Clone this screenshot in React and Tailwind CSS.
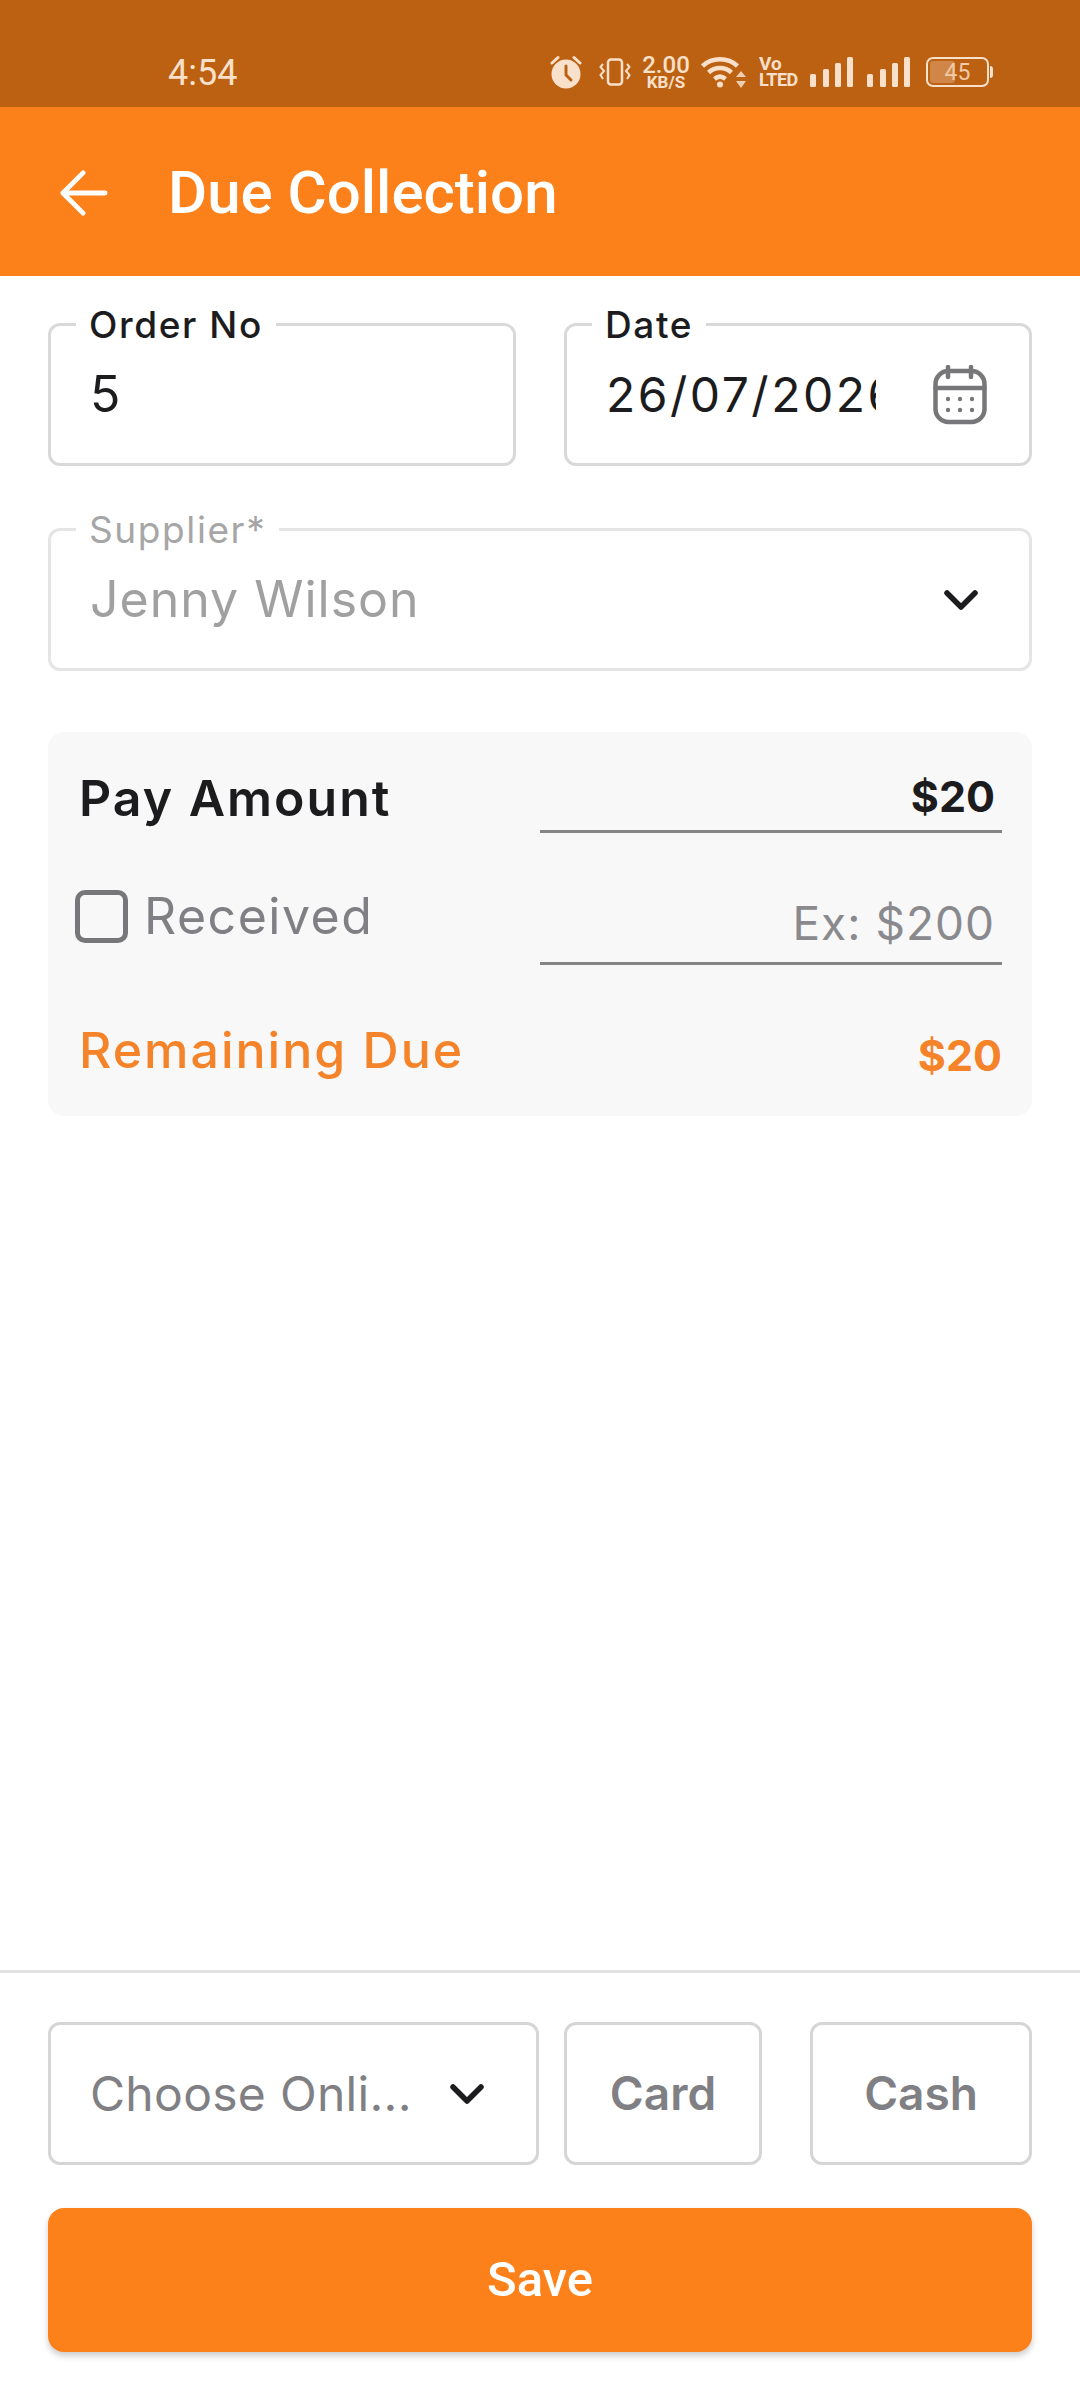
const sans = "font-['Inter','Noto_Sans',sans-serif]";

const Chevron = ({ className }) => (
    <svg viewBox="0 0 34 20" className={className} fill="none" stroke="#1c1c1e" strokeWidth="5.5" strokeLinecap="round" strokeLinejoin="round">
        <path d="M3 3 L17 17 L31 3" />
    </svg>
);

const CalendarIcon = () => (
    <svg viewBox="0 0 54 60" className="w-[54px] h-[60px]" fill="none" stroke="#77777a" strokeWidth="4.5" strokeLinecap="round">
        <rect x="2.5" y="6" width="49" height="51" rx="13" />
        <path d="M2.5 23 H51.5" />
        <path d="M15 2 V12 M38 2 V12" />
        <g fill="#77777a" stroke="none">
            <circle cx="15" cy="34" r="2.2" />
            <circle cx="27" cy="34" r="2.2" />
            <circle cx="39" cy="34" r="2.2" />
            <circle cx="15" cy="45" r="2.2" />
            <circle cx="27" cy="45" r="2.2" />
            <circle cx="39" cy="45" r="2.2" />
        </g>
    </svg>
);

const Signal = () => (
    <svg viewBox="0 0 44 30" className="w-[44px] h-[30px]" fill="#f8e0cb">
        <rect x="0" y="17" width="6" height="13" rx="1.5" />
        <rect x="13" y="12" width="6" height="18" rx="1.5" />
        <rect x="25" y="6" width="6" height="24" rx="1.5" />
        <rect x="37" y="0" width="6" height="30" rx="1.5" />
    </svg>
);

const StatusBar = () => (
    <div className="h-[107px] bg-[#bc6011] pt-[37px] pl-[168px] pr-[87px] flex items-center justify-between font-['Roboto',sans-serif] text-[#f8e0cb] shrink-0">
        <span className="mt-[2px] text-[36px] leading-none">4:54</span>
        <div className="flex items-center">
            {/* alarm */}
            <svg viewBox="0 0 32 34" className="w-[32px] h-[34px]">
                <circle cx="16" cy="19" r="14.5" fill="#f8e0cb" />
                <path d="M16 11 V20 L21 25" stroke="#bc6011" strokeWidth="3" fill="none" strokeLinecap="round" />
                <path d="M2 8 L8 2.5 M30 8 L24 2.5" stroke="#f8e0cb" strokeWidth="3" strokeLinecap="round" />
            </svg>
            {/* vibrate */}
            <svg viewBox="0 0 32 28" className="w-[32px] h-[28px] ml-[17px]" fill="none" stroke="#f8e0cb" strokeWidth="2.5">
                <rect x="9" y="1.5" width="14" height="25" rx="3" />
                <path d="M4 6 L1.5 9 L5 13 L1.5 17 L4 21 M28 6 L30.5 9 L27 13 L30.5 17 L28 21" strokeWidth="2" />
            </svg>
            <div className="ml-[10px] w-[50px] flex flex-col items-center leading-none">
                <span className="text-[24px] leading-[20px] font-medium">2.00</span>
                <span className="text-[17px] leading-[14px] font-bold">KB/S</span>
            </div>
            {/* wifi */}
            <svg viewBox="0 0 45 32" className="w-[45px] h-[32px] ml-[10px]" fill="none" stroke="#f8e0cb" strokeWidth="4.5">
                <path d="M1.5 10 C11 1 27 1 36.5 10" />
                <path d="M7.5 16.5 C14 10.5 24 10.5 30.5 16.5" />
                <path d="M13.5 23 C17 20 21 20 24.5 23" />
                <circle cx="19" cy="28.5" r="3" fill="#f8e0cb" stroke="none" />
                <path d="M40 15 L45 21 H35 Z M40 32 L45 25 H35 Z" fill="#f8e0cb" stroke="none" opacity="0.85" />
            </svg>
            <div className="ml-[13px] w-[35px] flex flex-col leading-none font-bold">
                <span className="text-[19px] leading-[16px]">Vo</span>
                <span className="text-[18px] leading-[16px] tracking-[-0.5px]">LTED</span>
            </div>
            <div className="ml-[16px]"><Signal /></div>
            <div className="ml-[13px]"><Signal /></div>
            {/* battery */}
            <div className="ml-[15px] flex items-center">
                <div className="w-[63px] h-[30px] border-[2.5px] border-[#f8e0cb] rounded-[7px] p-[2px] relative">
                    <div className="h-full w-[45%] bg-[#cf8646] rounded-[3px]" />
                    <span className="absolute inset-0 flex items-center justify-center text-[23px] leading-none text-[#f0c9a6]">45</span>
                </div>
                <div className="w-[3px] h-[12px] bg-[#f8e0cb] ml-[1px] rounded-r-sm" />
            </div>
        </div>
    </div>
);

const Field = ({ label, muted, className, children }) => (
    <div className={`relative h-[143px] border-[3px] rounded-[12px] bg-white flex items-center pl-[39px] ${muted ? 'border-[#e5e5e5]' : 'border-[#d9d9d9]'} ${className}`}>
        <span className={`absolute left-[25px] top-[-21px] bg-white px-[13px] text-[37px] tracking-[1.6px] leading-[40px] ${muted ? 'text-[#a6a6a6]' : 'text-[#1c1c1e] font-medium'}`}>
            {label}
        </span>
        {children}
    </div>
);

const App = () => {
    return (
        <div className={`w-[1080px] h-[2400px] bg-white flex flex-col ${sans}`}>
            <StatusBar />
            <div className="h-[169px] bg-[#fd811a] flex items-center pl-[60px] pt-[2px] shrink-0">
                <svg viewBox="0 0 50 48" className="w-[48px] h-[46px]" fill="none" stroke="#fff" strokeWidth="5" strokeLinecap="round" strokeLinejoin="round">
                    <path d="M24 3 L3 24 L24 45 M3 24 H47" />
                </svg>
                <h1 className="ml-[60px] text-[60px] leading-none font-medium text-white font-['Roboto',sans-serif]">Due Collection</h1>
            </div>

            <div className="px-[48px] pt-[47px] flex-1 flex flex-col">
                <div className="flex gap-[48px]">
                    <Field label="Order No" className="w-[468px]">
                        <span className="text-[50px] text-[#1c1c1e]">5</span>
                    </Field>
                    <Field label="Date" className="w-[468px]">
                        <div className="w-[270px] overflow-hidden whitespace-nowrap text-[48px] tracking-[2.5px] text-[#1c1c1e]">26/07/2026</div>
                        <div className="ml-[57px]"><CalendarIcon /></div>
                    </Field>
                </div>

                <Field label="Supplier*" muted className="mt-[62px] justify-between pr-[51px]">
                    <span className="text-[50px] tracking-[1px] text-[#a0a0a0]">Jenny Wilson</span>
                    <Chevron className="w-[34px] h-[20px]" />
                </Field>

                <div className="mt-[61px] h-[384px] bg-[#f8f8f8] rounded-[16px] pl-[31px] pr-[30px] flex flex-col">
                    <div className="h-[101px] pt-[31px] flex items-center justify-between">
                        <span className="text-[50px] leading-[60px] font-semibold tracking-[2px] text-[#1c1c1e]">Pay Amount</span>
                        <div className="w-[462px] h-full border-b-[3px] border-[#858585] flex items-center justify-end pr-[7px] text-[43px] font-bold text-[#1c1c1e]">$20</div>
                    </div>
                    <div className="h-[132px] flex justify-between">
                        <label className="pt-[34px] flex items-center text-[#808084] ml-[-4px]">
                            <span className="w-[53px] h-[53px] border-[5px] border-[#77777a] rounded-[10px]" />
                            <span className="ml-[16px] text-[50px] tracking-[1.5px]">Received</span>
                        </label>
                        <div className="w-[462px] pt-[52px] border-b-[3px] border-[#858585] flex items-center justify-end pr-[7px] text-[46px] tracking-[1px] text-[#8a8a8e]">Ex: $200</div>
                    </div>
                    <div className="flex-1 pt-[19px] flex items-center justify-between text-[#f5832a]">
                        <span className="text-[50px] font-medium tracking-[2px]">Remaining Due</span>
                        <span className="mt-[10px] text-[43px] font-bold">$20</span>
                    </div>
                </div>
            </div>

            <div className="border-t-[3px] border-[#e3e3e3] px-[48px] pt-[49px] pb-[48px] shrink-0">
                <div className="flex">
                    <div className="w-[491px] h-[143px] border-[3px] border-[#d6d6d6] rounded-[12px] flex items-center pl-[39px] pr-[52px] justify-between">
                        <span className="text-[48px] tracking-[0.3px] text-[#808084] whitespace-nowrap">Choose Onli...</span>
                        <Chevron className="w-[34px] h-[20px]" />
                    </div>
                    <button className="ml-[25px] w-[198px] h-[143px] border-[3px] border-[#d6d6d6] rounded-[12px] text-[46px] font-semibold text-[#808084]">Card</button>
                    <button className="ml-[48px] w-[222px] h-[143px] border-[3px] border-[#d6d6d6] rounded-[12px] text-[46px] font-semibold text-[#808084]">Cash</button>
                </div>
                <button className="mt-[43px] w-full h-[144px] bg-[#fd811a] rounded-[16px] shadow-[0_4px_6px_rgba(0,0,0,0.2)] text-[49px] font-medium text-white font-['Roboto',sans-serif]">Save</button>
            </div>
        </div>
    );
};

export default App;
